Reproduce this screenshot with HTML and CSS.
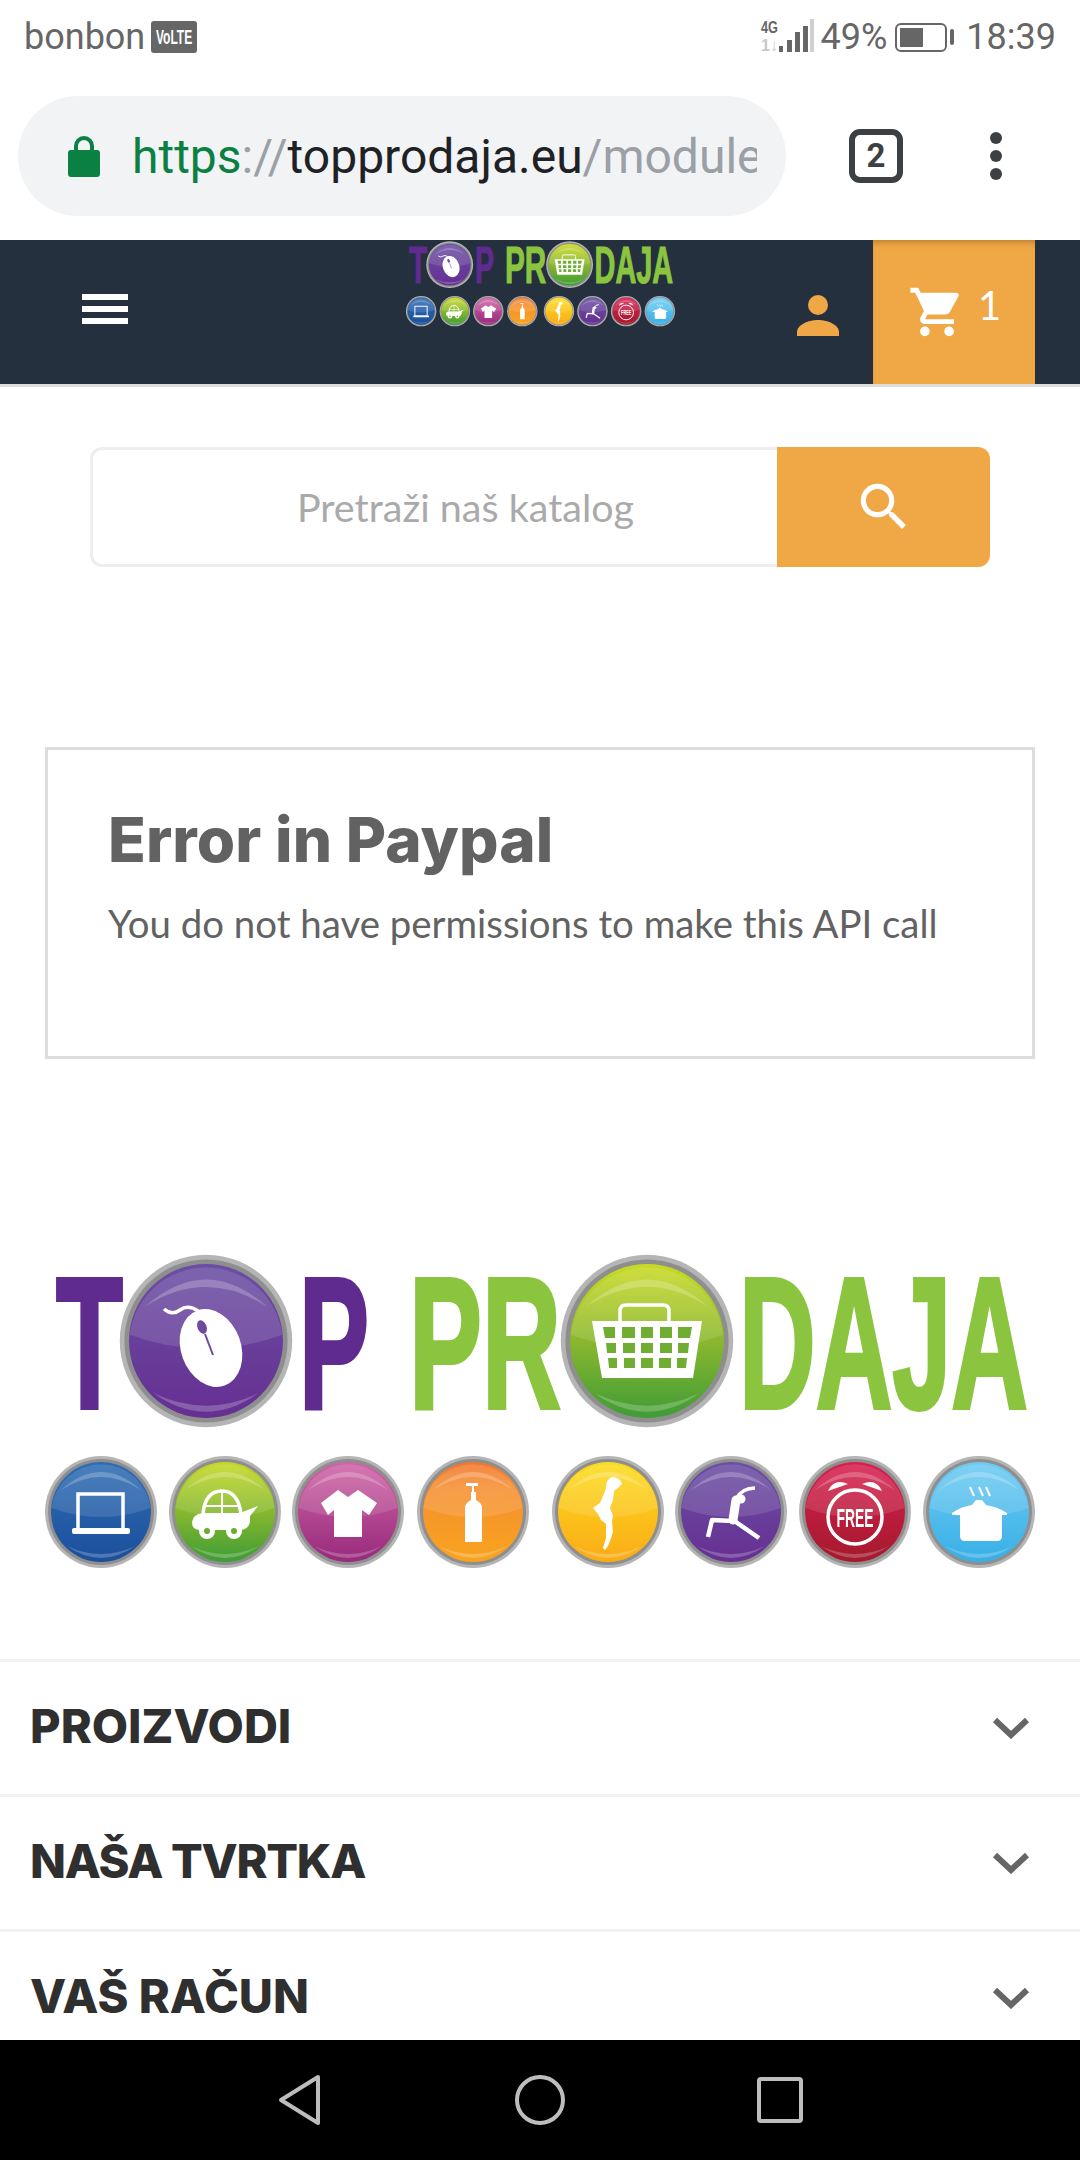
FILE: index.html
```html
<!DOCTYPE html>
<html lang="hr">
<head>
<meta charset="utf-8">
<title>Top Prodaja</title>
<link rel="stylesheet" href="styles.css">
</head>
<body>
<svg class="defs" width="0" height="0" aria-hidden="true">
  <defs>
    <linearGradient id="g-purple" x1="0" y1="0" x2="0" y2="1"><stop offset="0" stop-color="#6a4fa3"/><stop offset="1" stop-color="#662f92"/></linearGradient>
    <linearGradient id="g-green" x1="0" y1="0" x2="0" y2="1"><stop offset="0" stop-color="#c9da22"/><stop offset=".5" stop-color="#8ab72e"/><stop offset="1" stop-color="#3f9c36"/></linearGradient>
    <linearGradient id="g-blue" x1="0" y1="0" x2="0" y2="1"><stop offset="0" stop-color="#2f6db3"/><stop offset="1" stop-color="#1b4f9c"/></linearGradient>
    <linearGradient id="g-lime" x1="0" y1="0" x2="0" y2="1"><stop offset="0" stop-color="#c6d824"/><stop offset=".55" stop-color="#7fb52e"/><stop offset="1" stop-color="#3f9c36"/></linearGradient>
    <linearGradient id="g-pink" x1="0" y1="0" x2="0" y2="1"><stop offset="0" stop-color="#cf65a6"/><stop offset="1" stop-color="#982a7c"/></linearGradient>
    <linearGradient id="g-orange" x1="0" y1="0" x2="0" y2="1"><stop offset="0" stop-color="#f3762c"/><stop offset=".25" stop-color="#f58f31"/><stop offset="1" stop-color="#f8a41e"/></linearGradient>
    <linearGradient id="g-yellow" x1="0" y1="0" x2="0" y2="1"><stop offset="0" stop-color="#fcdc1c"/><stop offset="1" stop-color="#fbab18"/></linearGradient>
    <linearGradient id="g-red" x1="0" y1="0" x2="0" y2="1"><stop offset="0" stop-color="#d81f4f"/><stop offset="1" stop-color="#a31a2c"/></linearGradient>
    <linearGradient id="g-sky" x1="0" y1="0" x2="0" y2="1"><stop offset="0" stop-color="#6ecbf2"/><stop offset="1" stop-color="#38afe6"/></linearGradient>

    <g id="frame">
      <circle r="56" class="ring-outer"/>
      <circle r="53" class="ring-mid"/>
      <circle r="50"/>
      <path d="M-49.600 -4A50 50 0 0 1 49.600 -4Q0 14 -49.600 -4Z" class="gloss"/>
      <path d="M-40 -22Q0 -58 40 -22Q0 -48 -40 -22Z" class="shine"/>
      <path d="M-34 34Q0 58 34 34Q0 50 -34 34Z" class="shine"/>
    </g>

    <symbol id="logo" viewBox="40 1254 1000 320">
      <text x="56" y="1408" textLength="67" lengthAdjust="spacingAndGlyphs" class="logo-letters logo-purple">T</text>
      <text x="299" y="1408" textLength="70" lengthAdjust="spacingAndGlyphs" class="logo-letters logo-purple">P</text>
      <text x="409" y="1408" textLength="152" lengthAdjust="spacingAndGlyphs" class="logo-letters logo-lime">PR</text>
      <text x="739" y="1408" textLength="289" lengthAdjust="spacingAndGlyphs" class="logo-letters logo-lime">DAJA</text>

      <use href="#frame" transform="translate(206 1341) scale(1.54)" fill="url(#g-purple)"/>
      <g class="glyph">
        <ellipse cx="211" cy="1348" rx="30" ry="40" transform="rotate(-20 211 1348)"/>
        <path d="M164 1309Q172 1316 180 1310T198 1311L204 1322" class="glyph-line"/>
        <ellipse cx="202" cy="1327" rx="4.500" ry="7" transform="rotate(-22 202 1327)" class="glyph-cut"/>
        <path d="M205 1334L213 1355" class="cut-line"/>
      </g>

      <use href="#frame" transform="translate(647 1341) scale(1.54)" fill="url(#g-green)"/>
      <g class="glyph">
        <path d="M620 1322V1311Q620 1305 626 1305H663Q669 1305 669 1311V1322" class="glyph-line"/>
        <path d="M592 1321H702L693 1378H602Z"/>
      </g>
      <g class="basket-cells">
        <path d="M603 1327h12v11h-10zM622 1327h13v11h-13zM641 1327h12v11h-12zM660 1327h12v11h-12zM678 1327h14l-2 11h-12z"/>
        <path d="M606 1343h10v10h-9zM623 1343h12v10h-12zM641 1343h12v10h-12zM660 1343h12v10h-12zM678 1343h11l-1 10h-10z"/>
        <path d="M608 1358h9v10h-8zM624 1358h11v10h-11zM641 1358h12v10h-12zM659 1358h12v10h-12zM677 1358h10l-1 10h-9z"/>
      </g>

      <use href="#frame" transform="translate(101 1512)" fill="url(#g-blue)"/>
      <g class="glyph">
        <rect x="78" y="1494" width="45" height="36" class="glyph-line"/>
        <rect x="72" y="1528" width="58" height="6" rx="2"/>
      </g>

      <use href="#frame" transform="translate(225 1512)" fill="url(#g-lime)"/>
      <g class="glyph">
        <path d="M203 1514Q205 1491 222 1491Q238 1491 241 1514" class="glyph-line"/>
        <path d="M222 1491V1514M204 1506H240" class="glyph-line thin"/>
        <path d="M192 1522Q193 1514 203 1513H240L258 1506L250 1516L250 1522Q248 1530 240 1530H200Q192 1530 192 1522Z"/>
        <circle cx="207" cy="1531" r="8"/><circle cx="234" cy="1531" r="8"/>
      </g>
      <circle cx="207" cy="1531" r="3" class="car-hub"/><circle cx="234" cy="1531" r="3" class="car-hub"/>

      <use href="#frame" transform="translate(348 1512)" fill="url(#g-pink)"/>
      <path class="glyph" d="M338 1490L348 1497L358 1490L377 1503L369 1515L362 1510V1537H334V1510L328 1515L321 1503Z"/>

      <use href="#frame" transform="translate(473 1512)" fill="url(#g-orange)"/>
      <path class="glyph" d="M466 1483H478V1486H474V1492H476V1500Q482 1503 482 1508V1542H465V1508Q465 1503 471 1500V1492H472V1486H466Z"/>

      <use href="#frame" transform="translate(608 1512)" fill="url(#g-yellow)"/>
      <path class="glyph" d="M612 1477Q620 1477 622 1484L618 1488L614 1491L613 1500L610 1508L613 1516L612 1522L613 1532L610 1541L608 1546L605 1550L603 1548L606 1538L606 1524L601 1520L598 1514L593 1508L600 1503L603 1496L606 1488Q606 1479 612 1477Z"/>

      <use href="#frame" transform="translate(731 1512)" fill="url(#g-purple)"/>
      <g class="glyph">
        <path d="M736 1499Q742 1488 755 1488" class="glyph-line"/>
        <circle cx="741" cy="1499" r="4.500"/>
        <path d="M736 1500L733 1520" class="yoga-torso"/>
        <path d="M733 1521L712 1520L708 1537M733 1520L759 1538" class="yoga-leg"/>
      </g>

      <use href="#frame" transform="translate(855 1512)" fill="url(#g-red)"/>
      <g class="glyph">
        <circle cx="855" cy="1517" r="27" class="glyph-line"/>
        <path d="M828 1491Q834 1478 848 1484Z"/>
        <path d="M882 1491Q876 1478 862 1484Z"/>
      </g>
      <text x="855" y="1527" textLength="37" lengthAdjust="spacingAndGlyphs" class="logo-free">FREE</text>

      <use href="#frame" transform="translate(979 1512)" fill="url(#g-sky)"/>
      <g class="glyph">
        <path d="M970 1487L974 1496M979 1487L983 1496M986 1487L990 1496" class="glyph-line thin"/>
        <path d="M952 1513Q960 1507 972 1505L976 1500H982L986 1505Q998 1507 1007 1513V1515H1002V1536Q1002 1541 997 1541H965Q960 1541 960 1536V1515H952Z"/>
      </g>
    </symbol>
  </defs>
</svg>

<div class="phone">
  <div class="status">
    <div class="status-side">
      <span>bonbon</span>
      <svg class="volte" width="46" height="32" viewBox="0 0 46 32">
        <rect width="46" height="32" rx="3" class="volte-bg"/>
        <text transform="translate(5 23) scale(.6 1)" class="volte-text">VoLTE</text>
      </svg>
    </div>
    <div class="status-side">
      <svg class="signal" width="56" height="38" viewBox="0 0 56 38">
        <text x="1" y="15" textLength="17" lengthAdjust="spacingAndGlyphs" class="net-text">4G</text>
        <text x="1" y="33" textLength="17" lengthAdjust="spacingAndGlyphs" class="net-text net-faint">1↓</text>
        <rect x="19" y="28" width="4" height="6" class="bar"/>
        <rect x="27" y="22" width="5" height="12" class="bar"/>
        <rect x="35" y="14" width="5" height="20" class="bar"/>
        <rect x="50" y="1" width="4" height="33" class="bar-faint"/>
        <rect x="43" y="8" width="5" height="26" class="bar"/>
      </svg>
      <span>49%</span>
      <span class="battery"><span class="battery-fill"></span></span>
      <span class="battery-nib"></span>
      <span class="clock">18:39</span>
    </div>
  </div>

  <div class="chrome">
    <div class="omnibox">
      <svg class="lock" width="34" height="44" viewBox="0 0 34 44">
        <path d="M9 19V12a8 8 0 0 1 16 0V19" class="lock-loop"/>
        <rect x="1" y="16" width="32" height="27" rx="3" class="lock-body"/>
      </svg>
      <div class="url"><span class="url-green">https</span><span class="url-gray">://</span><span class="url-dark">topprodaja.eu</span><span class="url-gray">/module</span></div>
    </div>
    <div class="tabs">2</div>
    <div class="kebab"><i></i><i></i><i></i></div>
  </div>

  <div class="viewport">
    <header class="site-header">
      <div class="burger"><i></i><i></i><i></i></div>
      <svg class="logo-small"><use href="#logo"/></svg>
      <div class="header-right">
        <svg class="user" width="42" height="41" viewBox="0 0 42 41">
          <circle cx="21" cy="10" r="10"/>
          <path d="M0 41V37C0 30 11 25 21 25S42 30 42 37V41Z"/>
        </svg>
        <div class="cart">
          <svg class="cart-icon" width="58" height="58" viewBox="0 0 24 24"><path d="M7 18c-1.100 0-1.990.9-1.990 2S5.900 22 7 22s2-.9 2-2-.9-2-2-2zM1 2v2h2l3.600 7.590-1.350 2.450c-.16.280-.25.610-.25.960 0 1.100.9 2 2 2h12v-2H7.420c-.14 0-.25-.11-.25-.25l.03-.12.9-1.630h7.450c.75 0 1.410-.41 1.750-1.030l3.580-6.490c.08-.14.12-.31.12-.48 0-.55-.45-1-1-1H5.210l-.94-2H1zm16 16c-1.100 0-1.990.9-1.990 2s.89 2 1.990 2 2-.9 2-2-.9-2-2-2z"/></svg>
          <span class="cart-count">1</span>
        </div>
      </div>
    </header>

    <div class="search">
      <div class="search-input">Pretraži naš katalog</div>
      <div class="search-btn">
        <svg width="62" height="62" viewBox="0 0 24 24"><path d="M15.500 14h-.79l-.28-.27C15.410 12.590 16 11.110 16 9.500 16 5.910 13.090 3 9.500 3S3 5.910 3 9.500 5.910 16 9.500 16c1.610 0 3.090-.59 4.230-1.570l.27.28v.79l5 4.990L20.490 19l-4.990-5zm-6 0C7.010 14 5 11.990 5 9.500S7.010 5 9.500 5 14 7.010 14 9.500 11.990 14 9.500 14z"/></svg>
      </div>
    </div>

    <section class="error-box">
      <h1>Error in Paypal</h1>
      <p>You do not have permissions to make this API call</p>
    </section>

    <svg class="logo-large"><use href="#logo"/></svg>

    <footer class="accordion">
      <div class="acc-row"><span>PROIZVODI</span><svg class="chev" width="38" height="22" viewBox="0 0 38 22"><path d="M3 3L19 18L35 3"/></svg></div>
      <div class="acc-row"><span class="acc-tight">NAŠA TVRTKA</span><svg class="chev" width="38" height="22" viewBox="0 0 38 22"><path d="M3 3L19 18L35 3"/></svg></div>
      <div class="acc-row"><span>VAŠ RAČUN</span><svg class="chev" width="38" height="22" viewBox="0 0 38 22"><path d="M3 3L19 18L35 3"/></svg></div>
    </footer>
  </div>

  <nav class="android-nav">
    <svg width="44" height="52" viewBox="0 0 44 52"><path d="M40 3L3 26L40 49Z" class="nav-shape"/></svg>
    <svg width="52" height="52" viewBox="0 0 52 52"><circle cx="26" cy="26" r="23" class="nav-shape"/></svg>
    <svg width="46" height="46" viewBox="0 0 46 46"><rect x="2" y="2" width="42" height="42" rx="2" class="nav-shape"/></svg>
  </nav>
</div>
</body>
</html>
```
FILE: styles.css
```css
* { box-sizing: border-box; }
html, body { margin: 0; padding: 0; background: #fff; }
body { width: 1080px; height: 2160px; overflow: hidden; font-family: "Lato", sans-serif; }
.defs { position: absolute; }

/* logo pieces */
.ring-outer { fill: #b5b5b5; }
.ring-mid { fill: #8e8e8e; }
.gloss { fill: #fff; opacity: .12; }
.shine { fill: #fff; opacity: .22; }
.logo-letters { font-family: "Liberation Sans", sans-serif; font-weight: 700; font-size: 188px; stroke-width: 4px; }
.logo-purple { fill: #5f2b8f; stroke: #5f2b8f; }
.logo-lime { fill: #8bc53f; stroke: #8bc53f; }
.glyph { fill: #fff; }
.glyph-line { fill: none; stroke: #fff; stroke-width: 3.5px; }
.thin { stroke-width: 2px; }
.glyph-cut { fill: #6d4a9f; }
.cut-line { fill: none; stroke: #6d4a9f; stroke-width: 2px; }
.yoga-torso { fill: none; stroke: #fff; stroke-width: 9px; stroke-linecap: round; }
.yoga-leg { fill: none; stroke: #fff; stroke-width: 4.5px; stroke-linejoin: round; }
.basket-cells { fill: #6fae32; }
.car-hub { fill: #6aac30; }
.logo-free { font-family: "Liberation Sans", sans-serif; font-weight: 700; font-size: 25px; fill: #fff; text-anchor: middle; }

.phone { width: 1080px; height: 2160px; display: flex; flex-direction: column; }

/* status bar */
.status { height: 72px; padding: 2px 24px 0; display: flex; justify-content: space-between; align-items: center; color: #666; font: 400 36px/1 "Roboto", sans-serif; }
.status-side { display: flex; align-items: center; }
.volte { margin-left: 6px; }
.volte-bg { fill: #666; }
.volte-text { font: 700 20px "Liberation Sans", sans-serif; fill: #fff; }
.signal { margin-right: 5px; margin-left: 4px; }
.net-text { font: 700 17px "Liberation Sans", sans-serif; fill: #666; }
.net-faint { fill: #c8c8c8; }
.bar { fill: #666; }
.bar-faint { fill: #d0d0d0; }
.battery { margin-left: 8px; width: 52px; height: 29px; border: 2px solid #666; border-radius: 6px; padding: 3px; display: block; }
.battery-fill { display: block; width: 23px; height: 100%; background: #666; }
.battery-nib { margin-left: 3px; margin-right: 12px; width: 4px; height: 16px; border-radius: 2px; background: #666; }

/* browser chrome */
.chrome { height: 168px; display: flex; align-items: center; padding-left: 18px; }
.omnibox { width: 768px; height: 120px; border-radius: 60px; background: #f1f3f4; display: flex; align-items: center; padding: 0 29px 0 49px; }
.lock { flex: none; }
.lock-body { fill: #0b8043; }
.lock-loop { fill: none; stroke: #0b8043; stroke-width: 4px; }
.url { margin: 2px 0 0 31px; flex: 1; overflow: hidden; white-space: nowrap; font: 400 48px/60px "Roboto", sans-serif; }
.url-green { color: #0b8043; }
.url-gray { color: #9aa0a6; }
.url-dark { color: #202124; }
.tabs { margin-left: 63px; width: 54px; height: 54px; border: 6px solid #3c4043; border-radius: 11px; color: #3c4043; font: 700 33px/42px "Roboto", sans-serif; text-align: center; }
.kebab { margin-left: 87px; display: flex; flex-direction: column; gap: 6px; }
.kebab i { display: block; width: 12px; height: 12px; border-radius: 50%; background: #3c4043; }

/* page */
.viewport { height: 1800px; overflow: hidden; }
.site-header { height: 147px; border-bottom: 3px solid #ddd; background: #25303e; display: grid; grid-template-columns: 1fr 273px 1fr; }
.burger { align-self: start; margin: 54px 0 0 82px; width: 46px; display: flex; flex-direction: column; gap: 6px; }
.burger i { display: block; height: 6px; background: #fff; }
.logo-small { width: 273px; height: 87px; margin-top: 1px; }
.header-right { display: flex; justify-content: flex-end; padding-right: 45px; }
.user { margin: 55px 34px 0 0; fill: #f0a746; }
.cart { width: 162px; background: #f0a746; box-shadow: inset 0 6px 6px -4px rgba(120,70,20,.45); display: flex; align-items: flex-start; padding: 43px 0 0 35px; }
.cart-icon { fill: #fff; flex: none; }
.cart-count { margin: 2px 0 0 12px; color: #fff; font: 400 40px/1 "Lato", sans-serif; }

.search { margin: 60px 0 0 90px; width: 900px; height: 120px; display: flex; }
.search-input { flex: 1; border: 3px solid #eee; border-right: 0; border-radius: 12px 0 0 12px; padding: 0 0 2px 61px; display: flex; align-items: center; justify-content: center; color: #aaa; font-size: 39.5px; }
.search-btn { width: 213px; background: #f0a746; border-radius: 0 12px 12px 0; display: flex; align-items: center; justify-content: center; fill: #fff; }

.error-box { margin: 180px 0 0 45px; width: 990px; height: 312px; border: 3px solid #ddd; padding: 52px 60px 0; color: #626262; }
.error-box h1 { margin: 0; font: 800 62px/76px "Inter", sans-serif; letter-spacing: .1px; }
.error-box p { margin: 20px 0 0; font-size: 38.4px; line-height: 50px; }

.logo-large { display: block; margin: 195px 0 0 40px; width: 1000px; height: 320px; filter: blur(.6px); }

.accordion { margin-top: 85px; }
.acc-row { height: 135px; border-top: 3px solid #f2f2f2; padding: 0 30px; display: flex; align-items: center; justify-content: space-between; color: #2f2f2f; font: 800 47px/1 "Inter", sans-serif; }
.acc-row span { margin-bottom: 5px; }
.acc-row .acc-tight { letter-spacing: -1.3px; }
.chev { margin-right: 20px; fill: none; stroke: #666; stroke-width: 6px; }

.android-nav { height: 120px; background: #000; display: grid; grid-template-columns: repeat(3, 240px); justify-content: center; justify-items: center; align-items: center; }
.android-nav svg { display: block; }
.nav-shape { fill: none; stroke: #bdbdbd; stroke-width: 4px; stroke-linejoin: round; }
```
